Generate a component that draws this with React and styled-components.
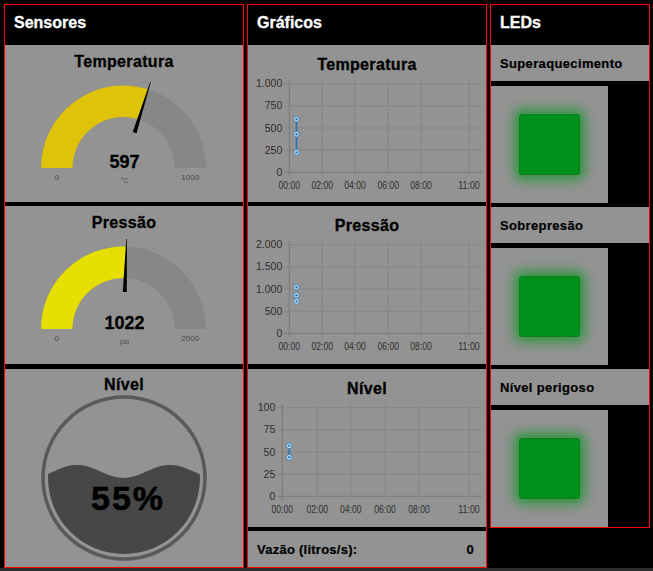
import styled, { createGlobalStyle } from "styled-components";

const GlobalStyle = createGlobalStyle`
  html, body {
    margin: 0;
    padding: 0;
    background: #000;
  }
  body {
    width: 653px;
    height: 571px;
    overflow: hidden;
    font-family: "Liberation Sans", Arial, sans-serif;
  }
`;

const Page = styled.div`
  display: flex;
  flex-direction: column;
  width: 653px;
  height: 571px;
`;

const Main = styled.div`
  flex: 1;
  display: flex;
  align-items: flex-start;
  gap: 3px;
  padding: 4px 0 0 4px;
`;

const Strip = styled.div`
  height: 3px;
  background: #2c2c2c;
`;

const Group = styled.section`
  box-sizing: border-box;
  width: ${(p) => p.$w}px;
  height: ${(p) => p.$h}px;
  border: 1px solid #f00;
  display: flex;
  flex-direction: column;
`;

const GroupHeader = styled.h2`
  margin: 0;
  height: 40px;
  box-sizing: border-box;
  padding: 8px 0 0 9px;
  font-size: 16px;
  line-height: 20px;
  font-weight: bold;
  color: #fff;
  -webkit-text-stroke: 0.3px #fff;
`;

const Card = styled.div`
  height: ${(p) => p.$h}px;
  margin-top: ${(p) => p.$gap || 0}px;
  background: #939393;
  display: flex;
  flex-direction: column;
  align-items: center;
  overflow: hidden;
  flex-shrink: 0;
`;

const CardTitle = styled.h3`
  margin: ${(p) => p.$top}px 0 0;
  height: ${(p) => p.$h || 20}px;
  line-height: 20px;
  font-size: 16px;
  letter-spacing: 0.35px;
  font-weight: bold;
  color: #000;
  -webkit-text-stroke: 0.3px #000;
`;

const Drawing = styled.svg`
  display: block;
  flex-shrink: 0;
  font-family: "Liberation Sans", Arial, sans-serif;
`;

const InfoRow = styled.div`
  height: 36px;
  margin-top: 4px;
  box-sizing: border-box;
  padding: 0 12px 0 9px;
  background: #939393;
  display: flex;
  align-items: center;
  justify-content: space-between;
  font-size: 13px;
  font-weight: bold;
  letter-spacing: 0.25px;
  color: #000;
  -webkit-text-stroke: 0.2px #000;
`;

const LedLabel = styled.div`
  height: 36px;
  margin-top: ${(p) => p.$gap || 0}px;
  box-sizing: border-box;
  padding-left: 9px;
  background: #939393;
  display: flex;
  align-items: center;
  font-size: 13px;
  font-weight: bold;
  letter-spacing: 0.35px;
  color: #000;
  -webkit-text-stroke: 0.2px #000;
`;

const LedBox = styled.div`
  width: 117px;
  height: 117px;
  margin-top: 5px;
  background: #939393;
  display: flex;
  align-items: center;
  justify-content: center;
`;

const Led = styled.div`
  width: 61px;
  height: 61px;
  box-sizing: border-box;
  border-radius: 3px;
  border: 1px solid #0b7d1d;
  background: ${(p) => p.$color};
  box-shadow: 0 0 12px 5px rgba(0, 150, 25, 0.7);
`;

// gauge (justgage style)
const Gauge = ({ title, value, min, max, unit, color, h, gap }) => {
  const cx = 118.5;
  const cy = 97;
  const R = 82.5;
  const r = 51;
  const t = ((value - min) / (max - min)) * Math.PI;
  const c = Math.cos(t);
  const s = Math.sin(t);
  const fill = `M ${cx - R} ${cy} A ${R} ${R} 0 0 1 ${cx - R * c} ${cy - R * s} L ${cx - r * c} ${cy - r * s} A ${r} ${r} 0 0 0 ${cx - r} ${cy} Z`;
  const bg = `M ${cx - R} ${cy} A ${R} ${R} 0 0 1 ${cx + R} ${cy} L ${cx + r} ${cy} A ${r} ${r} 0 0 0 ${cx - r} ${cy} Z`;
  const dx = -c;
  const dy = -s;
  const px = -dy;
  const py = dx;
  const tip = [cx + 90 * dx, cy + 90 * dy];
  const b = [cx + 37 * dx, cy + 37 * dy];
  const needle = `${tip[0] + 0.3 * px},${tip[1] + 0.3 * py} ${b[0] + 2 * px},${b[1] + 2 * py} ${b[0] - 2 * px},${b[1] - 2 * py} ${tip[0] - 0.3 * px},${tip[1] - 0.3 * py}`;
  const mid = (R + r) / 2;
  return (
    <Card $h={h} $gap={gap}>
      <CardTitle $top={7} $h={19}>{title}</CardTitle>
      <Drawing width="238" height="132">
        <path d={bg} fill="#878787" />
        <path d={fill} fill={color} />
        <polygon points={needle} fill="#000" />
        <text x={cx + 1} y={cy} textAnchor="middle" fontSize="18" fontWeight="bold" fill="#000" stroke="#000" strokeWidth="0.3">
          {value}
        </text>
        <text x={cx - mid} y="108.5" textAnchor="middle" fontSize="8" fill="#4a4a4a">
          {min}
        </text>
        <text x={cx + mid} y="108.5" textAnchor="middle" fontSize="8" fill="#4a4a4a">
          {max}
        </text>
        <text x={cx + 1} y="111.5" textAnchor="middle" fontSize="7" fill="#4a4a4a">
          {unit}
        </text>
      </Drawing>
    </Card>
  );
};

// liquid fill gauge
const Liquid = ({ title, value, h, gap }) => {
  const cx = 119;
  const cy = 83;
  const inner = 76;
  const level = cy + inner - (value / 100) * inner * 2 + 1;
  let d = `M ${cx - inner - 2} ${cy + inner + 2}`;
  for (let x = cx - inner - 2; x <= cx + inner + 2; x += 2) {
    const y = level - 6.5 * Math.cos((2 * Math.PI * (x - 72)) / 93);
    d += ` L ${x} ${y.toFixed(2)}`;
  }
  d += ` L ${cx + inner + 2} ${cy + inner + 2} Z`;
  return (
    <Card $h={h} $gap={gap}>
      <CardTitle $top={6}>{title}</CardTitle>
      <Drawing width="238" height="172">
        <defs>
          <clipPath id="liquidClip">
            <circle cx={cx} cy={cy} r={inner} />
          </clipPath>
        </defs>
        <circle cx={cx} cy={cy} r="81" fill="none" stroke="#595959" strokeWidth="3.5" />
        <path d={d} fill="#474747" clipPath="url(#liquidClip)" />
        <text x={cx + 4} y="115" textAnchor="middle" fontSize="34" fontWeight="bold" letterSpacing="2" fill="#000" stroke="#000" strokeWidth="0.5">
          {value}%
        </text>
      </Drawing>
    </Card>
  );
};

const TIMES = ["00:00", "02:00", "04:00", "06:00", "08:00", "11:00"];

const Chart = ({ title, ticks, max, xs, pointX, points, line, h, gap }) => {
  const yTop = 8.7;
  const yBot = 97.3;
  const span = yBot - yTop;
  const axis = xs[0];
  const ys = ticks.map((_, i) => yTop + (span * i) / (ticks.length - 1));
  const py = (v) => yBot - (v / max) * span;
  return (
    <Card $h={h} $gap={gap}>
      <CardTitle $top={10}>{title}</CardTitle>
      <Drawing width="238" height="128">
        {ys.map((y, i) => (
          <g key={i}>
            <line x1={axis - 5} x2="234" y1={y} y2={y} stroke={i === ys.length - 1 ? "#7a7a7a" : "#858585"} />
            <text x={axis - 7} y={y + 3.5} textAnchor="end" fontSize="10.5" fill="#2e2e2e">
              {ticks[i]}
            </text>
          </g>
        ))}
        {xs.map((x, i) => (
          <g key={i}>
            <line x1={x} x2={x} y1="5" y2="101" stroke={i === 0 ? "#7a7a7a" : "#858585"} />
            <text x={x} y="114" textAnchor="middle" fontSize="10.5" textLength="21.5" lengthAdjust="spacingAndGlyphs" fill="#2e2e2e">
              {TIMES[i]}
            </text>
          </g>
        ))}
        {line && (
          <polyline
            points={points.map((v) => `${pointX},${py(v)}`).join(" ")}
            fill="none"
            stroke="#1f77b4"
            strokeWidth="1.5"
          />
        )}
        {points.map((v, i) => (
          <g key={i}>
            <circle cx={pointX} cy={py(v)} r="2.8" fill="#d8e5f2" stroke="#1f77b4" strokeWidth="0.8" />
            <circle cx={pointX} cy={py(v)} r="1.2" fill="#1f77b4" />
          </g>
        ))}
      </Drawing>
    </Card>
  );
};

const WIDE_X = [41.3, 74.3, 107, 140.3, 173, 221];
const NARROW_X = [34.3, 69.3, 102.7, 137, 171, 221];

const App = () => {
  return (
    <>
      <GlobalStyle />
      <Page>
        <Main>
          <Group $w={240} $h={564}>
            <GroupHeader>Sensores</GroupHeader>
            <Gauge title="Temperatura" value={597} min={0} max={1000} unit="°C" color="#dfc30a" h={157} />
            <Gauge title="Pressão" value={1022} min={0} max={2000} unit="psi" color="#e6df00" h={158} gap={4} />
            <Liquid title="Nível" value={55} h={198} gap={5} />
          </Group>

          <Group $w={240} $h={564}>
            <GroupHeader>Gráficos</GroupHeader>
            <Chart
              title="Temperatura"
              ticks={["1.000", "750", "500", "250", "0"]}
              max={1000}
              xs={WIDE_X}
              pointX={48.5}
              points={[599, 430, 225]}
              line
              h={157}
            />
            <Chart
              title="Pressão"
              ticks={["2.000", "1.500", "1.000", "500", "0"]}
              max={2000}
              xs={WIDE_X}
              pointX={48.5}
              points={[1040, 860, 720]}
              h={158}
              gap={4}
            />
            <Chart
              title="Nível"
              ticks={["100", "75", "50", "25", "0"]}
              max={100}
              xs={NARROW_X}
              pointX={41.3}
              points={[57, 44]}
              line
              h={158}
              gap={5}
            />
            <InfoRow>
              <span>Vazão (litros/s):</span>
              <span>0</span>
            </InfoRow>
          </Group>

          <Group $w={160} $h={524}>
            <GroupHeader>LEDs</GroupHeader>
            <LedLabel>Superaquecimento</LedLabel>
            <LedBox>
              <Led $color="#00911c" />
            </LedBox>
            <LedLabel $gap={4}>Sobrepresão</LedLabel>
            <LedBox>
              <Led $color="#00911c" />
            </LedBox>
            <LedLabel $gap={4}>Nível perigoso</LedLabel>
            <LedBox>
              <Led $color="#00911c" />
            </LedBox>
          </Group>
        </Main>
        <Strip />
      </Page>
    </>
  );
};

export default App;
